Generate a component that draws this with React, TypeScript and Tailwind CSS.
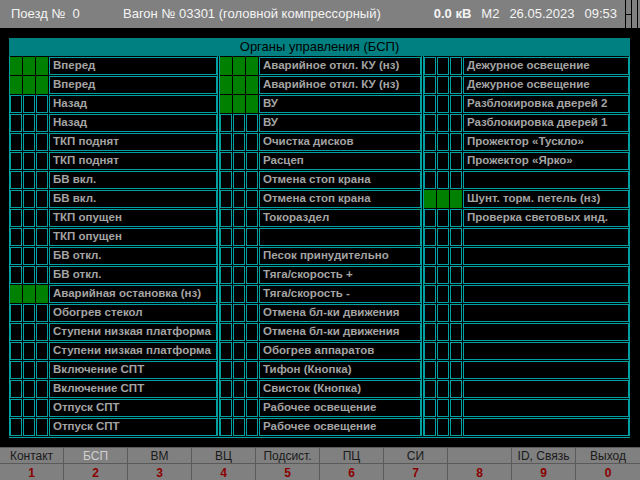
import React from "react";

type Row = { label: string; on?: boolean };

const col1: Row[] = [
  { label: "Вперед", on: true },
  { label: "Вперед", on: true },
  { label: "Назад" },
  { label: "Назад" },
  { label: "ТКП поднят" },
  { label: "ТКП поднят" },
  { label: "БВ вкл." },
  { label: "БВ вкл." },
  { label: "ТКП опущен" },
  { label: "ТКП опущен" },
  { label: "БВ откл." },
  { label: "БВ откл." },
  { label: "Аварийная остановка (нз)", on: true },
  { label: "Обогрев стекол" },
  { label: "Ступени низкая платформа" },
  { label: "Ступени низкая платформа" },
  { label: "Включение СПТ" },
  { label: "Включение СПТ" },
  { label: "Отпуск СПТ" },
  { label: "Отпуск СПТ" },
];

const col2: Row[] = [
  { label: "Аварийное откл. КУ (нз)", on: true },
  { label: "Аварийное откл. КУ (нз)", on: true },
  { label: "ВУ", on: true },
  { label: "ВУ" },
  { label: "Очистка дисков" },
  { label: "Расцеп" },
  { label: "Отмена стоп крана" },
  { label: "Отмена стоп крана" },
  { label: "Токораздел" },
  { label: "" },
  { label: "Песок принудительно" },
  { label: "Тяга/скорость +" },
  { label: "Тяга/скорость -" },
  { label: "Отмена бл-ки движения" },
  { label: "Отмена бл-ки движения" },
  { label: "Обогрев аппаратов" },
  { label: "Тифон (Кнопка)" },
  { label: "Свисток (Кнопка)" },
  { label: "Рабочее освещение" },
  { label: "Рабочее освещение" },
];

const col3: Row[] = [
  { label: "Дежурное освещение" },
  { label: "Дежурное освещение" },
  { label: "Разблокировка дверей 2" },
  { label: "Разблокировка дверей 1" },
  { label: "Прожектор «Тускло»" },
  { label: "Прожектор «Ярко»" },
  { label: "" },
  { label: "Шунт. торм. петель (нз)", on: true },
  { label: "Проверка световых инд." },
  ...Array.from({ length: 11 }, () => ({ label: "" })),
];

const keys = [
  { label: "Контакт", num: "1" },
  { label: "БСП", num: "2", dim: true },
  { label: "ВМ", num: "3" },
  { label: "ВЦ", num: "4" },
  { label: "Подсист.", num: "5" },
  { label: "ПЦ", num: "6" },
  { label: "СИ", num: "7" },
  { label: "", num: "8" },
  { label: "ID, Связь", num: "9" },
  { label: "Выход", num: "0" },
];

const Column = ({ rows, width }: { rows: Row[]; width: string }) => (
  <div className={`${width} border-x border-[#00a0a0] flex flex-col gap-[1px] pt-[1px]`}>
    {rows.map((r, i) => (
      <div key={i} className="flex gap-[1px] h-[18px]">
        {[0, 1, 2].map((c) =>
          r.on ? (
            <div key={c} className="w-[12px] h-[18px] bg-[#008000]" />
          ) : (
            <div key={c} className="w-[12px] h-[18px] border border-[#00a0a0]" />
          )
        )}
        <div className="flex-1 border border-[#00a0a0] pl-[3px] flex items-center text-[11.5px] font-bold text-[#a4a4a4] leading-none whitespace-nowrap overflow-hidden">
          {r.label}
        </div>
      </div>
    ))}
  </div>
);

export default function App() {
  return (
    <div
      className="w-[640px] h-[480px] bg-black flex flex-col overflow-hidden"
      style={{ fontFamily: '"Liberation Sans", Arial, sans-serif' }}
    >
      {/* Header */}
      <div className="h-[28px] bg-[#808080] flex items-center text-[13px] text-[#f4f4f4]">
        <span className="w-[123px] pl-[11px] whitespace-pre">Поезд №  0</span>
        <span>Вагон № 03301 (головной компрессорный)</span>
        <div className="ml-auto flex items-center gap-[10px]">
          <span className="font-bold">0.0 кВ</span>
          <span>М2</span>
          <span>26.05.2023</span>
          <span>09:53</span>
        </div>
        <div className="ml-[8px] h-full flex gap-[1px] bg-black pl-[1px]">
          <div className="w-[5px] h-full bg-[#808080] flex flex-col gap-[1px]">
            <div className="h-[13px]" />
            <div className="flex-1 border-t border-black" />
          </div>
          <div className="w-[5px] h-full bg-[#808080]" />
          <div className="w-[2px] h-full bg-[#808080]" />
        </div>
      </div>

      {/* Panel */}
      <div className="mt-[10px] mx-[9px] w-[621px] flex flex-col">
        <div className="h-[18px] bg-[#008080] flex items-center justify-center text-[13px] text-black">
          Органы управления (БСП)
        </div>
        <div className="flex gap-[1px] border-b border-[#00a0a0] pb-[1px]">
          <Column rows={col1} width="w-[209px]" />
          <Column rows={col2} width="w-[203px]" />
          <Column rows={col3} width="w-[207px]" />
        </div>
      </div>

      {/* Bottom keys */}
      <div className="mt-auto h-[33px] bg-[#808080] grid grid-cols-10 border-t border-[#5a5a5a]">
        {keys.map((k, i) => (
          <div key={i} className="flex flex-col border-r border-[#5a5a5a] last:border-r-0">
            <div
              className={`h-[16px] border-b border-[#5a5a5a] flex items-center justify-center text-[12px] ${
                k.dim ? "text-[#d0d0d0]" : "text-[#1a1a1a]"
              }`}
            >
              {k.label}
            </div>
            <div className="flex-1 flex items-center justify-center text-[12px] font-bold text-[#8b0000]">
              {k.num}
            </div>
          </div>
        ))}
      </div>
    </div>
  );
}
